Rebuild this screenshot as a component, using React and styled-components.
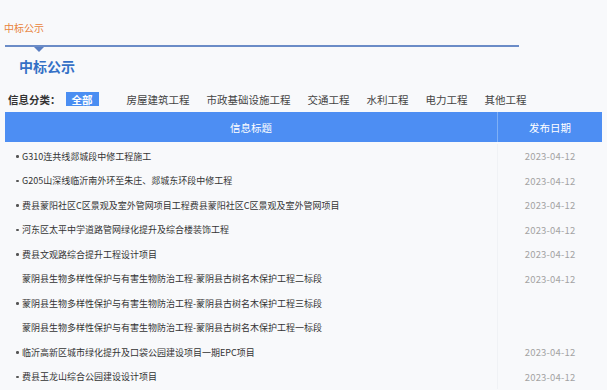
import React from 'react';
import styled, { createGlobalStyle } from 'styled-components';

//======= STYLES =======//

const GlobalStyle = createGlobalStyle`
  html, body {
    margin: 0;
    padding: 0;
    background: #f8f9fb;
  }
  body {
    font-family: "Noto Sans CJK SC", "Noto Sans", sans-serif;
    color: #333;
  }
`
const Page = styled.div`
  width: 607px;
  height: 390px;
  overflow: hidden;
  padding-top: 21px;
  box-sizing: border-box;
`
const Crumb = styled.div`
  padding-left: 4px;
  font-size: 10px;
  line-height: 14px;
  color: #e8843c;
`
const TitleLine = styled.div`
  position: relative;
  margin: 10px 0 0 5px;
  width: 514px;
  height: 2px;
  background: #6b8cc7;
`
const Arrow = styled.span`
  position: absolute;
  left: 29px;
  top: 2px;
  width: 0;
  height: 0;
  border-left: 5px solid transparent;
  border-right: 5px solid transparent;
  border-top: 5px solid #5a7fc2;
`
const Heading = styled.h2`
  margin: 9px 0 0 19px;
  font-size: 14px;
  line-height: 20px;
  font-weight: bold;
  color: #3470c6;
`
const FilterRow = styled.div`
  display: flex;
  align-items: center;
  margin: 16px 0 0 8px;
  height: 14px;
  font-size: 10.5px;
`
const FilterLabel = styled.span`
  font-weight: bold;
  color: #333;
  margin-right: 5px;
`
const FilterItem = styled.span`
  display: inline-flex;
  align-items: center;
  justify-content: center;
  height: 14px;
  color: ${(props) => (props.active ? '#fff' : '#444')};
  background: ${(props) => (props.active ? '#4a8ef2' : 'transparent')};
  width: ${(props) => (props.active ? '33px' : 'auto')};
  box-sizing: border-box;
  margin-right: ${(props) => (props.active ? '28px' : '17px')};
  font-weight: ${(props) => (props.active ? 'bold' : 'normal')};
`
const Table = styled.div`
  margin: 6px 5px 0 5px;
  width: 597px;
`
const HeadRow = styled.div`
  display: flex;
  height: 30px;
  background: #4d8ef3;
  color: #fff;
  font-size: 10.5px;
`
const HeadCell = styled.div`
  display: flex;
  align-items: center;
  justify-content: center;
  width: ${(props) => props.w};
  border-left: ${(props) => (props.split ? '1px solid #7fb0f6' : 'none')};
`
const Body = styled.div`
  margin-top: 2px;
`
const Row = styled.div`
  display: flex;
  height: 24.5px;
  align-items: center;
`
const TitleCell = styled.div`
  display: flex;
  align-items: center;
  width: 493px;
  padding-left: 11px;
  box-sizing: border-box;
  font-size: 9px;
  color: #333;
  white-space: nowrap;
  overflow: hidden;
`
const Bullet = styled.span`
  display: inline-block;
  width: 6px;
  flex: none;
  &::before {
    content: '';
    display: ${(props) => (props.show ? 'block' : 'none')};
    width: 2.5px;
    height: 2.5px;
    border-radius: 50%;
    background: #555;
  }
`
const DateCell = styled.div`
  width: 104px;
  align-self: stretch;
  display: flex;
  align-items: center;
  justify-content: center;
  border-left: 1px solid #f0f2f5;
  font-size: 9.5px;
  color: #a3a3a3;
  letter-spacing: 0.2px;
`

//======= DATA =======//

const filters = ['全部', '房屋建筑工程', '市政基础设施工程', '交通工程', '水利工程', '电力工程', '其他工程'];

const rows = [
  { title: 'G310连共线郯城段中修工程施工', date: '2023-04-12', dot: true },
  { title: 'G205山深线临沂南外环至朱庄、郯城东环段中修工程', date: '2023-04-12', dot: true },
  { title: '费县蒙阳社区C区景观及室外管网项目工程费县蒙阳社区C区景观及室外管网项目', date: '2023-04-12', dot: true },
  { title: '河东区太平中学道路管网绿化提升及综合楼装饰工程', date: '2023-04-12', dot: true },
  { title: '费县文观路综合提升工程设计项目', date: '2023-04-12', dot: true },
  { title: '蒙阴县生物多样性保护与有害生物防治工程-蒙阴县古树名木保护工程二标段', date: '2023-04-12', dot: false },
  { title: '蒙阴县生物多样性保护与有害生物防治工程-蒙阴县古树名木保护工程三标段', date: '', dot: true },
  { title: '蒙阴县生物多样性保护与有害生物防治工程-蒙阴县古树名木保护工程一标段', date: '', dot: false },
  { title: '临沂高新区城市绿化提升及口袋公园建设项目一期EPC项目', date: '2023-04-12', dot: true },
  { title: '费县玉龙山综合公园建设设计项目', date: '2023-04-12', dot: true },
];

//======= COMPONENT =======//

export default function App() {
  return (
    <Page>
      <GlobalStyle />
      <Crumb>中标公示</Crumb>
      <TitleLine>
        <Arrow />
      </TitleLine>
      <Heading>中标公示</Heading>
      <FilterRow>
        <FilterLabel>信息分类：</FilterLabel>
        {filters.map((f, idx) => (
          <FilterItem key={f} active={idx === 0}>{f}</FilterItem>
        ))}
      </FilterRow>
      <Table>
        <HeadRow>
          <HeadCell w="493px">信息标题</HeadCell>
          <HeadCell w="104px" split>发布日期</HeadCell>
        </HeadRow>
        <Body>
          {rows.map((r, idx) => (
            <Row key={idx}>
              <TitleCell>
                <Bullet show={r.dot} />
                {r.title}
              </TitleCell>
              <DateCell>{r.date}</DateCell>
            </Row>
          ))}
        </Body>
      </Table>
    </Page>
  );
}
